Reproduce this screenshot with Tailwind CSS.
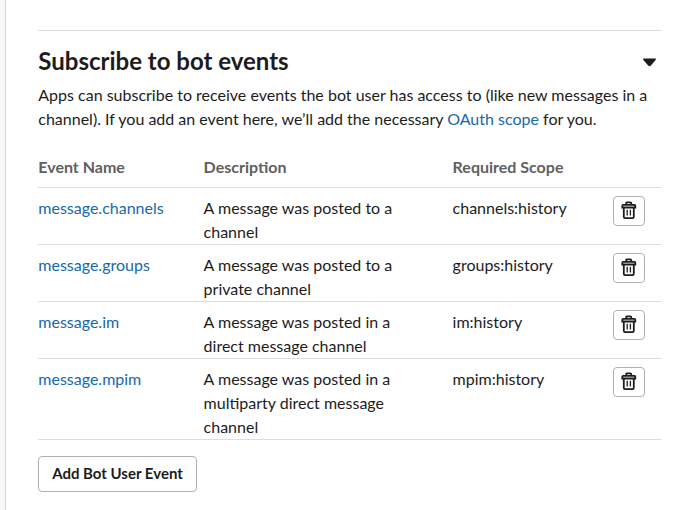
<!DOCTYPE html>
<html lang="en">
<head>
<meta charset="utf-8">
<title>Event Subscriptions</title>
<script src="https://cdn.jsdelivr.net/npm/@tailwindcss/browser@4"></script>
</head>
<body class="h-[510px] overflow-hidden bg-[#f8f8f8] pl-[5px] font-['Lato',sans-serif] text-base leading-6 text-[#1d1c1d]">
<svg class="hidden">
  <symbol id="trash" viewBox="0 0 16 20">
    <path d="M5.2 4.5V3.2Q5.2 2.3 6.2 2.3h3.1q1 0 1 .9V4.5M2.1 4.9h11.4q.8 0 .8.8v1.8H1.3V5.7q0-.8.8-.8zM2.8 7.5v9.3q0 1.3 1.3 1.3h7.4q1.3 0 1.3-1.3V7.5" fill="none" stroke="currentColor" stroke-width="1.8"/>
    <path d="M6.2 9.8v5.6M9.4 9.8v5.6" stroke="currentColor" stroke-width="1.3"/>
  </symbol>
</svg>
<main class="h-full border-l border-[#d5d5d5] bg-white pt-[30px] pr-[29px] pl-8">
  <section class="border-t border-[#dddddd]">
    <header class="flex h-[52px] items-center justify-between pt-2 pr-1 pl-[0.3px]">
      <h2 class="text-2xl leading-8 font-bold">Subscribe to bot events</h2>
      <svg class="mt-0.5 mr-[0.5px] h-[9px] w-[15px]" viewBox="0 0 15 9"><path d="M2 .5h11q1.7 0 .6 1.4L8.9 7.4Q7.5 9 6.1 7.4L1.4 1.9Q.3.5 2 .5z" fill="currentColor"/></svg>
    </header>
    <p class="w-[620px] pl-[0.3px]">Apps can subscribe to receive events the bot user has access to (like new messages in a<br>channel). If you add an event here, we’ll add the necessary <a class="text-[#1868ab]">OAuth scope</a> for you.</p>
    <table class="mt-6 w-[623px] table-fixed text-left">
      <colgroup><col class="w-[165px]"><col class="w-[249px]"><col class="w-[161px]"><col class="w-12"></colgroup>
      <thead class="text-[#616061]">
        <tr class="h-8 border-b border-[#dddddd] align-top"><th class="p-0 pl-[0.3px]">Event Name</th><th class="p-0 pl-[0.6px]">Description</th><th class="p-0 pl-[0.6px]">Required Scope</th><th class="p-0"></th></tr>
      </thead>
      <tbody>
        <tr class="border-b border-[#dddddd] align-top">
          <td class="pt-2 pl-[0.3px]"><a class="text-[#1868ab]">message.channels</a></td><td class="pt-2 pl-[0.6px]">A message was posted to a<br>channel</td><td class="pt-2 pl-[0.6px]">channels:history</td>
          <td class="pt-2"><button class="flex h-[30px] w-8 items-start justify-center rounded border border-[#b0b0b0] pt-[3px]"><svg class="h-5 w-4"><use href="#trash"/></svg></button></td>
        </tr>
        <tr class="border-b border-[#dddddd] align-top">
          <td class="pt-2 pl-[0.3px]"><a class="text-[#1868ab]">message.groups</a></td><td class="pt-2 pl-[0.6px]">A message was posted to a<br>private channel</td><td class="pt-2 pl-[0.6px]">groups:history</td>
          <td class="pt-2"><button class="flex h-[30px] w-8 items-start justify-center rounded border border-[#b0b0b0] pt-[3px]"><svg class="h-5 w-4"><use href="#trash"/></svg></button></td>
        </tr>
        <tr class="border-b border-[#dddddd] align-top">
          <td class="pt-2 pl-[0.3px]"><a class="text-[#1868ab]">message.im</a></td><td class="pt-2 pl-[0.6px]">A message was posted in a<br>direct message channel</td><td class="pt-2 pl-[0.6px]">im:history</td>
          <td class="pt-2"><button class="flex h-[30px] w-8 items-start justify-center rounded border border-[#b0b0b0] pt-[3px]"><svg class="h-5 w-4"><use href="#trash"/></svg></button></td>
        </tr>
        <tr class="border-b border-[#dddddd] align-top">
          <td class="pt-2 pl-[0.3px]"><a class="text-[#1868ab]">message.mpim</a></td><td class="pt-2 pl-[0.6px]">A message was posted in a<br>multiparty direct message<br>channel</td><td class="pt-2 pl-[0.6px]">mpim:history</td>
          <td class="pt-2"><button class="flex h-[30px] w-8 items-start justify-center rounded border border-[#b0b0b0] pt-[3px]"><svg class="h-5 w-4"><use href="#trash"/></svg></button></td>
        </tr>
      </tbody>
    </table>
    <button class="mt-4 h-9 w-[159px] rounded border border-[#b0b0b0] pb-0.5 text-[15px] font-bold">Add Bot User Event</button>
  </section>
</main>
</body>
</html>
